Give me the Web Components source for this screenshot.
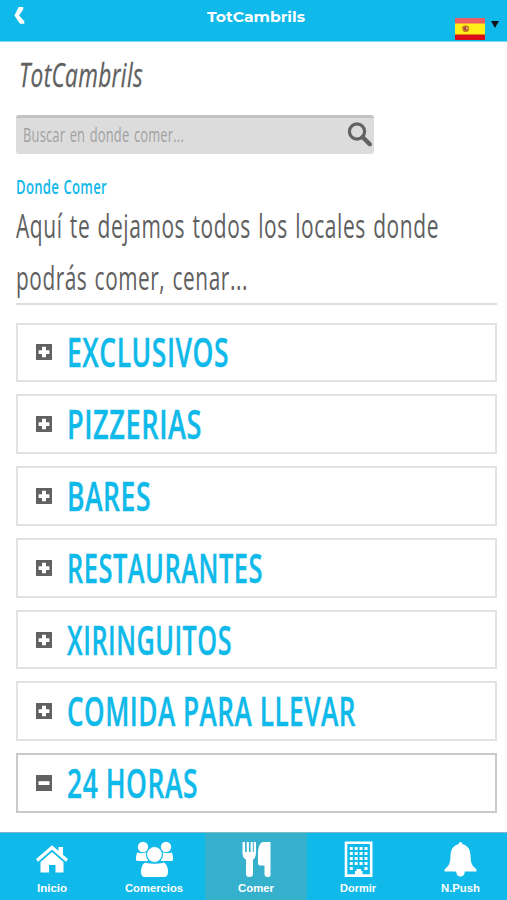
<!DOCTYPE html>
<html lang="es">
<head>
<meta charset="utf-8">
<title>TotCambrils</title>
<style>
  :root {
    --blue: #0fb9e9;
    --ink: #606060;
    --display: "Open Sans", "Noto Sans", sans-serif;
  }
  body {
    margin: 0;
    background: #fff;
    font-family: var(--display);
  }
</style>
</head>
<body>
<tot-app></tot-app>
<script>
// Single line of text, narrowed to the given width
class NarrowText extends HTMLElement {
  constructor() {
    super();
    this.attachShadow({ mode: 'open' });
    this.shadowRoot.innerHTML = `
      <style>
        :host { display: block; white-space: nowrap; }
        span { display: inline-block; transform-origin: 0 50%; }
      </style>
      <span><slot></slot></span>
    `;
  }

  connectedCallback() {
    const width = Number(this.getAttribute('width'));
    const span = this.shadowRoot.querySelector('span');
    this.style.width = width + 'px';
    span.style.transform = `scaleX(${width / span.getBoundingClientRect().width})`;
  }
}

class TopBar extends HTMLElement {
  constructor() {
    super();
    this.attachShadow({ mode: 'open' });
    this.shadowRoot.innerHTML = `
      <style>
        :host {
          display: grid;
          grid-template-columns: 60px 1fr 60px;
          height: 42px;
          box-sizing: border-box;
          background: var(--blue);
          border-bottom: 1px solid #7fdcf5;
          color: #fff;
        }
        .back { margin: 7px 0 0 14px; }
        .title {
          padding-top: 6px;
          font: 700 15px/22px Montserrat, "Open Sans", sans-serif;
        }
        .title narrow-text { margin: 0 auto; position: relative; left: 2px; }
        .lang {
          display: flex;
          align-items: flex-start;
          gap: 6px;
          padding: 18px 0 0 8px;
        }
        .arrow { margin-top: 3px; }
        svg { display: block; }
      </style>
      <svg class="back" width="11" height="17" viewBox="0 0 11 17">
        <path d="M4.7 0H9.2V2.6L5 8.5 10.3 14V16.7H6L.4 8.5Z" fill="#fff"/>
      </svg>
      <div class="title"><narrow-text width="98"><slot></slot></narrow-text></div>
      <div class="lang">
        <svg width="30" height="22" viewBox="0 0 30 22">
          <path d="M0 0H30V22H0Z" fill="#ffee18"/>
          <path d="M0 0H30V5.5H0Z" fill="#ed5d62"/>
          <path d="M0 16.5H30V22H0Z" fill="#d80d18"/>
          <path d="M7 9 9 7.5H12L14 9V12L12.5 14H9L7.5 12Z" fill="#c87528"/>
          <path d="M9 9H12V12H9Z" fill="#a94b42"/>
          <path d="M11 9.5H12.5V11H11Z" fill="#f7c7a0"/>
        </svg>
        <svg class="arrow" width="8" height="7" viewBox="0 0 8 7">
          <path d="M0 0H8L4 7Z" fill="#101418"/>
        </svg>
      </div>
    `;
  }
}

class SearchBox extends HTMLElement {
  constructor() {
    super();
    this.attachShadow({ mode: 'open' });
    this.shadowRoot.innerHTML = `
      <style>
        :host {
          display: flex;
          justify-content: space-between;
          box-sizing: border-box;
          width: 357.5px;
          height: 39px;
          padding-left: 7px;
          background: #dcdcdc;
          border-top: 3px solid #c2c2c2;
          border-radius: 3px;
          color: #a2a2a2;
          font-size: 20px;
          line-height: 34px;
          font-weight: 500;
          letter-spacing: .3px;
          word-spacing: 1.5px;
        }
        svg { margin: 4px 1px 0 0; }
      </style>
      <narrow-text width="161"><slot></slot></narrow-text>
      <svg width="26" height="26" viewBox="0 0 26 26" fill="none" stroke="#626262">
        <circle cx="10" cy="9.5" r="7.6" stroke-width="3.2"/>
        <path d="M15.5 15 22.8 22.2" stroke-width="4.4" stroke-linecap="round"/>
      </svg>
    `;
  }
}

class AccordionItem extends HTMLElement {
  constructor() {
    super();
    this.attachShadow({ mode: 'open' });
  }

  connectedCallback() {
    const open = this.hasAttribute('open');
    const sign = open ? 'M2.5 6.2H13.5V10H2.5Z' : 'M6 2.8H10V6.2H13.4V10H10V13.2H6V10H2.6V6.2H6Z';
    this.shadowRoot.innerHTML = `
      <style>
        :host {
          display: flex;
          align-items: center;
          box-sizing: border-box;
          height: 59.8px;
          padding-left: 17.5px;
          gap: 15px;
          border: 2px solid ${open ? '#cacaca' : '#e2e2e2'};
          color: var(--blue);
          font-size: 40px;
          line-height: 54px;
          font-weight: 600;
          letter-spacing: .8px;
          -webkit-text-stroke: .4px var(--blue);
        }
        svg { display: block; flex: none; }
      </style>
      <svg width="16" height="16" viewBox="0 0 16 16">
        <path d="M0 0H16V16H0Z" fill="#616161"/>
        <path d="${sign}" fill="#fff"/>
      </svg>
      <narrow-text width="${this.getAttribute('width')}"><slot></slot></narrow-text>
    `;
  }
}

const ICONS = {
  home: `
    <path d="M3 19.5 18 6.5 33 19.5" fill="none" stroke="#fff" stroke-width="3.3"/>
    <path d="M24.5 6H29V16L24.5 12ZM6.5 21 18 11 29.5 21V31.5H21.5V24H15V31.5H6.5Z" fill="#fff"/>`,
  people: `
    <g fill="#fff">
      <circle cx="7" cy="6" r="5.2"/><circle cx="30" cy="6" r="5.2"/>
      <path d="M1 11.5Q7 13 12 11V20H2Q-1 20 0 16ZM36 11.5Q30 13 25 11V20H35Q38 20 37 16Z"/>
      <circle cx="18.5" cy="13.5" r="8" stroke="#0fb9e9" stroke-width="1.2"/>
      <path d="M9 21.5Q18.5 24 28 21.5 32 24 32 31 32 36 28 36H9Q5 36 5 31 5 24 9 21.5Z"/>
    </g>`,
  food: `
    <path d="M4.5 1H7V11H8.7V1H10.9V11H12.6V1H14.8V11H15.8V1H18V12Q18 17 15 18.5V33Q15 36 11.3 36 8 36 8 33V18.5Q4.5 17 4.5 12Z" fill="#fff"/>
    <path d="M24.5 1H32.5V34Q32.5 36 29.5 36 26.5 36 26.5 33V24.5H22Q20 24.5 20 22V13Q20 3 24.5 1Z" fill="#fff"/>`,
  hotel: `
    <path d="M6 1.8H31.2V34.6H6Z" fill="none" stroke="#fff" stroke-width="2.6"/>
    <path d="M11.3 6V30M16.2 6V25M21.1 6V25M26 6V30" stroke="#fff" stroke-width="3" stroke-dasharray="3 2"/>
    <path d="M15 34V30H16.5V28H21V30H22.5V34Z" fill="#fff"/>`,
  bell: `
    <path d="M18.5 1Q20 1 20.4 3 28 5 28.5 14 28.5 22 31 25L34.5 28.5V30.5H22.8Q22.5 35.5 18.5 35.5 14.5 35.5 14.2 30.5H2.5V28.5L6 25Q8.5 22 8.5 14 9 5 16.6 3 17 1 18.5 1Z" fill="#fff"/>`
};

class TabItem extends HTMLElement {
  constructor() {
    super();
    this.attachShadow({ mode: 'open' });
  }

  connectedCallback() {
    this.shadowRoot.innerHTML = `
      <style>
        :host {
          display: flex;
          flex-direction: column;
          align-items: center;
          padding-top: 8px;
          color: #fff;
          font: 700 11px/14px "Liberation Sans", Arial, sans-serif;
        }
        :host([active]) { background: #35b1ce; }
        svg { display: block; margin-bottom: 3px; }
      </style>
      <svg width="37" height="37" viewBox="0 0 37 37">${ICONS[this.getAttribute('icon')]}</svg>
      <narrow-text width="${this.getAttribute('width')}"><slot></slot></narrow-text>
    `;
  }
}

class TabBar extends HTMLElement {
  constructor() {
    super();
    this.attachShadow({ mode: 'open' });
    this.shadowRoot.innerHTML = `
      <style>
        :host {
          display: grid;
          grid-template-columns: repeat(5, 102px);
          box-sizing: border-box;
          height: 68px;
          padding-left: 1px;
          overflow: hidden;
          background: var(--blue);
          border-top: 1px solid #7fb9c9;
        }
      </style>
      <slot></slot>
    `;
  }
}

class TotApp extends HTMLElement {
  constructor() {
    super();
    this.attachShadow({ mode: 'open' });
    this.shadowRoot.innerHTML = `
      <style>
        :host {
          display: flex;
          flex-direction: column;
          width: 507px;
          height: 900px;
          overflow: hidden;
        }
        main {
          flex: 1;
          min-height: 0;
          padding: 0 10px 0 16px;
          color: var(--ink);
        }
        h1, h2, p { margin: 0; font-weight: 400; }
        h1 {
          padding: 8px 0 0 3px;
          font-size: 33.5px;
          line-height: 48px;
          font-style: italic;
          font-weight: 500;
          letter-spacing: .5px;
          -webkit-text-stroke: .3px var(--ink);
        }
        search-box { margin-top: 17px; }
        h2 {
          margin-top: 18px;
          color: var(--blue);
          font-size: 20.5px;
          line-height: 28px;
          font-weight: 600;
          letter-spacing: .4px;
          word-spacing: 1px;
        }
        p {
          height: 102.5px;
          font-size: 32.5px;
          line-height: 52px;
          letter-spacing: .9px;
          word-spacing: 2px;
          border-bottom: 2px solid #dedede;
        }
        .list {
          display: flex;
          flex-direction: column;
          gap: 12px;
          margin-top: 18px;
        }
      </style>
      <top-bar>TotCambrils</top-bar>
      <main>
        <h1><narrow-text width="124">TotCambrils</narrow-text></h1>
        <search-box>Buscar en donde comer...</search-box>
        <h2><narrow-text width="91">Donde Comer</narrow-text></h2>
        <p>
          <narrow-text width="423">Aquí te dejamos todos los locales donde</narrow-text>
          <narrow-text width="232">podrás comer, cenar...</narrow-text>
        </p>
        <div class="list">
          <accordion-item width="162">EXCLUSIVOS</accordion-item>
          <accordion-item width="135">PIZZERIAS</accordion-item>
          <accordion-item width="84">BARES</accordion-item>
          <accordion-item width="196">RESTAURANTES</accordion-item>
          <accordion-item width="165">XIRINGUITOS</accordion-item>
          <accordion-item width="289">COMIDA PARA LLEVAR</accordion-item>
          <accordion-item width="131" open>24 HORAS</accordion-item>
        </div>
      </main>
      <tab-bar>
        <tab-item icon="home" width="30">Inicio</tab-item>
        <tab-item icon="people" width="58">Comercios</tab-item>
        <tab-item icon="food" width="36" active>Comer</tab-item>
        <tab-item icon="hotel" width="36">Dormir</tab-item>
        <tab-item icon="bell" width="39">N.Push</tab-item>
      </tab-bar>
    `;
  }
}

customElements.define('narrow-text', NarrowText);
customElements.define('top-bar', TopBar);
customElements.define('search-box', SearchBox);
customElements.define('accordion-item', AccordionItem);
customElements.define('tab-item', TabItem);
customElements.define('tab-bar', TabBar);
customElements.define('tot-app', TotApp);
</script>
</body>
</html>
